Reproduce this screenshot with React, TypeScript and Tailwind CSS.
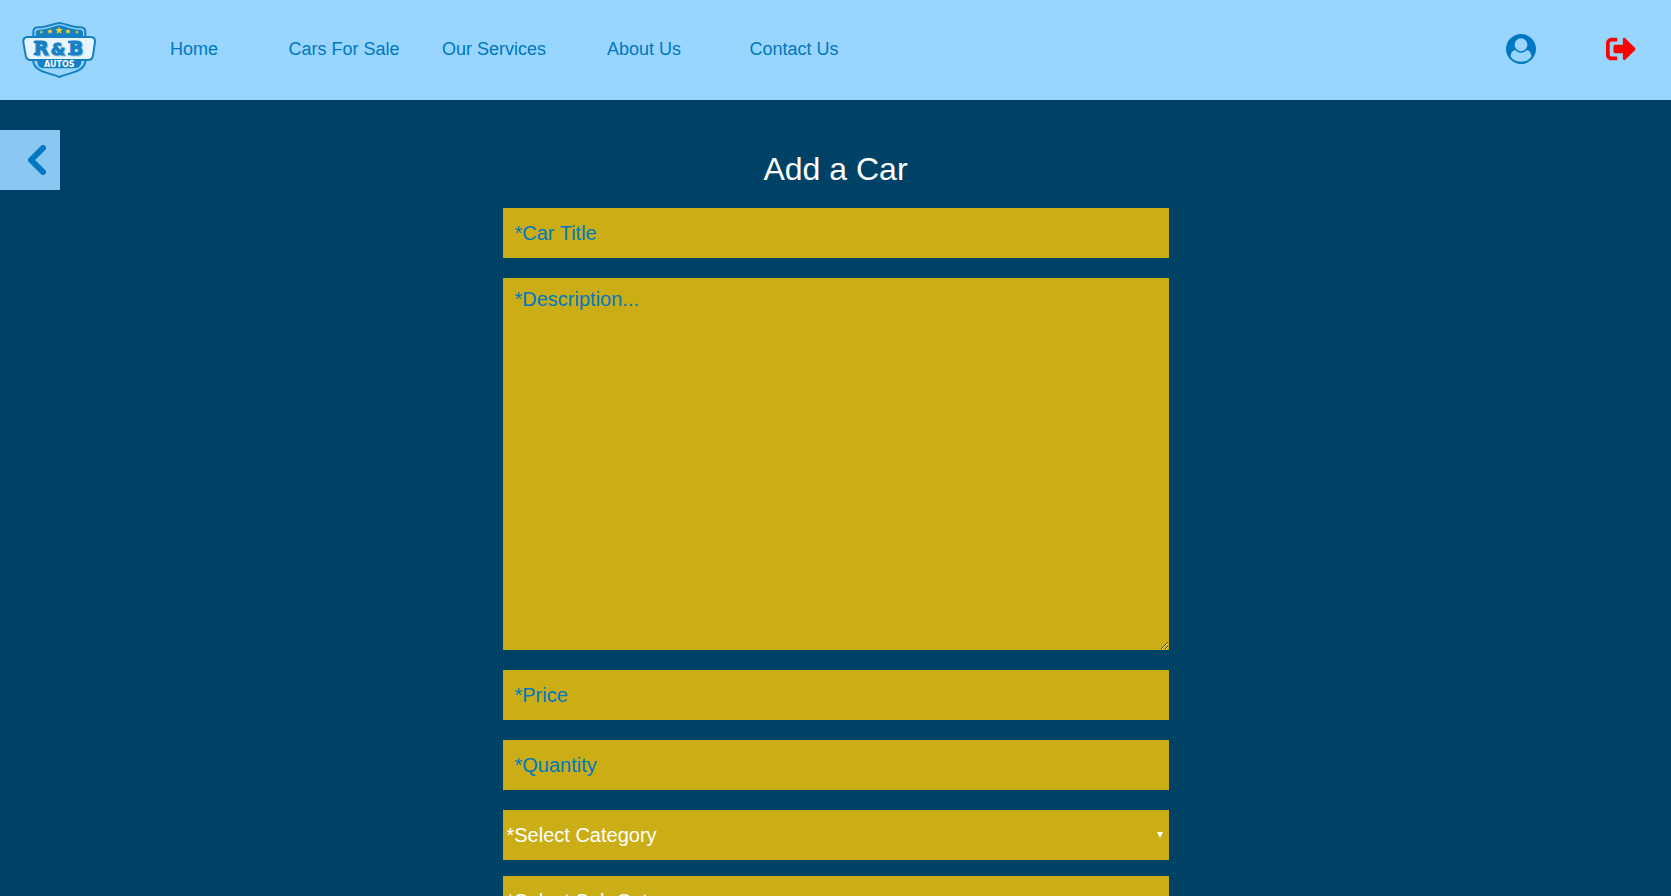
import type { ReactNode } from "react";
import { FaSignOutAlt } from "react-icons/fa";

const navLinks = ["Home", "Cars For Sale", "Our Services", "About Us", "Contact Us"];

const fieldClass =
  "block w-full bg-[#cbae16] px-3 text-xl text-white outline-none placeholder:text-[#0077c2] placeholder:opacity-100";

function Logo() {
  return (
    <svg viewBox="66 66 222 168" className="h-14 w-[74px]" role="img" aria-label="R&amp;B Autos">
      <path
        d="M178 69C158 71 139 83 114 82Q100 83 100 96V186C106 216 146 218 178 231C210 218 250 216 256 186V96Q256 83 242 82C217 83 198 71 178 69Z"
        fill="#98d6ff"
        stroke="#1680c4"
        strokeWidth="6"
      />
      <path
        d="M178 76C158 78 140 90 116 89Q107 90 107 98V112H249V98Q249 90 240 89C216 90 198 78 178 76Z"
        fill="#1680c4"
      />
      <path d="M112 178H244V188Q241 205 224 205H132Q115 205 112 188Z" fill="#1680c4" />
      <path
        d="M82 111H273Q286 112 285 126L279 166Q277 180 264 180H92Q79 180 77 166L70 126Q69 112 82 111Z"
        fill="#e8f5ff"
        stroke="#1680c4"
        strokeWidth="6"
      />
      <g fill="#f8cf1c">
        <path d="M177 80l3 7 8 1-6 5 2 8-7-4-7 4 2-8-6-5 8-1z" />
        <path d="M150 86l2 5 6 1-4 4 1 5-5-3-5 3 1-5-4-4 6-1z" />
        <path d="M204 86l2 5 6 1-4 4 1 5-5-3-5 3 1-5-4-4 6-1z" />
        <path d="M124 91l1 3 4 1-3 3 1 3-3-2-3 2 1-3-3-3 4-1z" />
        <path d="M231 91l1 3 4 1-3 3 1 3-3-2-3 2 1-3-3-3 4-1z" />
      </g>
      <g
        fontFamily="DejaVu Sans, sans-serif"
        fontWeight="700"
        fontSize="56"
        textAnchor="middle"
        strokeWidth="3"
      >
        <g fill="#a9cde8" stroke="#a9cde8">
          <text x="127" y="168">R</text>
          <text x="177" y="168" fontSize="50">&amp;</text>
          <text x="231" y="168">B</text>
        </g>
        <g fill="#1680c4" stroke="#1680c4">
          <text x="124" y="164">R</text>
          <text x="174" y="164" fontSize="50">&amp;</text>
          <text x="228" y="164">B</text>
        </g>
      </g>
      <path
        d="M101 122h8v8h-8zM101 158h8v8h-8zM204 122h8v8h-8zM204 158h8v8h-8z"
        fill="#1680c4"
      />
      <text
        x="178"
        y="200"
        fill="#fff"
        fontFamily="DejaVu Sans, sans-serif"
        fontWeight="700"
        fontSize="24"
        textAnchor="middle"
      >
        AUTOS
      </text>
    </svg>
  );
}

function UserIcon() {
  return (
    <svg viewBox="0 0 1792 1792" className="size-[30px] fill-[#0077c2]" aria-hidden="true">
      <path d="M1523 1339q-22-155-87.5-257.5t-184.5-118.5q-67 74-159.5 115.5t-195.5 41.5-195.5-41.5-159.5-115.5q-119 16-184.5 118.5t-87.5 257.5q106 150 271 237.5t356 87.5 356-87.5 271-237.5zm-243-699q0-159-112.5-271.5t-271.5-112.5-271.5 112.5-112.5 271.5 112.5 271.5 271.5 112.5 271.5-112.5 112.5-271.5zm512 256q0 182-71 347.5t-190.5 286-285.5 191.5-349 71q-182 0-348-71t-286-191-191-286-71-348 71-348 191-286 286-191 348-71 348 71 286 191 191 286 71 348z" />
    </svg>
  );
}

function SelectField({ label, children }: { label: string; children?: ReactNode }) {
  return (
    <div className="relative">
      <select
        aria-label={label}
        className="block h-[50px] w-full appearance-none bg-[#cbae16] px-1 text-xl text-white outline-none"
      >
        <option>{label}</option>
        {children}
      </select>
      <svg
        viewBox="0 0 6 6"
        className="pointer-events-none absolute top-[22px] right-1.5 size-1.5 fill-white"
        aria-hidden="true"
      >
        <path d="M0 0H6L3 6Z" />
      </svg>
    </div>
  );
}

export default function App() {
  return (
    <div className="min-h-screen bg-[#004266] font-['Liberation_Sans',Arial,sans-serif]">
      <header className="flex h-[100px] items-center bg-[#98d6ff]">
        <a href="#home" className="flex w-[119px] shrink-0 pl-[22px]">
          <Logo />
        </a>
        <nav className="flex">
          {navLinks.map((name) => (
            <a key={name} href="#nav" className="w-[150px] pb-0.5 text-center text-lg text-[#0077c2]">
              {name}
            </a>
          ))}
        </nav>
        <div className="ml-auto flex pb-0.5">
          <button type="button" aria-label="Account" className="flex w-[100px] justify-center">
            <UserIcon />
          </button>
          <button type="button" aria-label="Log out" className="flex w-[100px] justify-center">
            <FaSignOutAlt className="size-[30px] text-[#ff0000]" />
          </button>
        </div>
      </header>

      <main className="grid grid-cols-[1fr_minmax(0,666px)_1fr]">
        <button
          type="button"
          aria-label="Back"
          className="mt-[30px] flex size-[60px] items-center justify-end bg-[#8ac8f3] pr-3.5"
        >
          <svg
            viewBox="0 0 18 30"
            className="h-[30px] w-[18px] fill-none stroke-[#0077c2]"
            strokeWidth="6"
            strokeLinecap="round"
            strokeLinejoin="round"
            aria-hidden="true"
          >
            <path d="M15 3L3 15L15 27" />
          </svg>
        </button>

        <form className="pb-5">
          <h1 className="pt-[49px] pb-[19px] text-center text-[32px] leading-10 text-white">Add a Car</h1>
          <div className="flex flex-col gap-5">
            <input aria-label="Car Title" placeholder="*Car Title" className={`${fieldClass} h-[50px]`} />
            <textarea
              aria-label="Description"
              placeholder="*Description..."
              className={`${fieldClass} h-[372px] resize py-[7px]`}
            />
            <input aria-label="Price" placeholder="*Price" className={`${fieldClass} h-[50px]`} />
            <input aria-label="Quantity" placeholder="*Quantity" className={`${fieldClass} h-[50px]`} />
            <div className="flex flex-col gap-4">
              <SelectField label="*Select Category" />
              <SelectField label="*Select Sub Category" />
            </div>
          </div>
        </form>
      </main>
    </div>
  );
}
